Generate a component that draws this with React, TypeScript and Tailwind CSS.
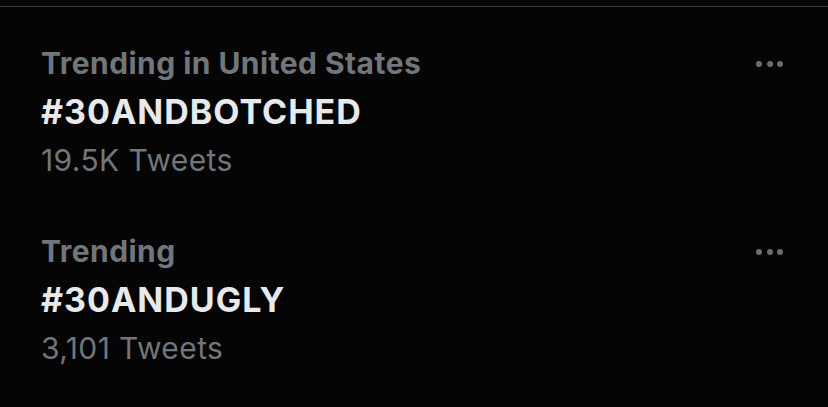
import React from "react";

type Trend = { context: string; tag: string; count: string };

const trends: Trend[] = [
  { context: "Trending in United States", tag: "#30ANDBOTCHED", count: "19.5K Tweets" },
  { context: "Trending", tag: "#30ANDUGLY", count: "3,101 Tweets" },
];

function MoreDots() {
  return (
    <div className="flex items-center gap-[4.3px] pt-[22px]">
      <span className="block h-[6px] w-[6px] rounded-full bg-[#6b6e71]" />
      <span className="block h-[6px] w-[6px] rounded-full bg-[#6b6e71]" />
      <span className="block h-[6px] w-[6px] rounded-full bg-[#6b6e71]" />
    </div>
  );
}

function TrendRow({ trend }: { trend: Trend }) {
  return (
    <div className="flex items-start justify-between pl-[41px] pr-[45px]">
      <div className="flex flex-col">
        <span className="text-[30px] leading-[49px] font-bold tracking-[0.45px] text-[#71767b]">
          {trend.context}
        </span>
        <span className="text-[34px] leading-[47px] font-bold tracking-[1px] text-[#e7e9ea]">
          {trend.tag}
        </span>
        <span className="text-[30px] leading-[51px] tracking-[0.4px] text-[#71767b]">
          {trend.count}
        </span>
      </div>
      <MoreDots />
    </div>
  );
}

export default function App() {
  return (
    <div
      className="h-[407px] w-[828px] overflow-hidden bg-[#050505]"
      style={{ fontFamily: "Inter, 'Liberation Sans', sans-serif" }}
    >
      <div className="mt-[6px] h-px bg-[#3c3c3c]" />
      <div className="flex flex-col gap-[41px] pt-[32px]">
        {trends.map((t) => (
          <TrendRow key={t.tag} trend={t} />
        ))}
      </div>
    </div>
  );
}
